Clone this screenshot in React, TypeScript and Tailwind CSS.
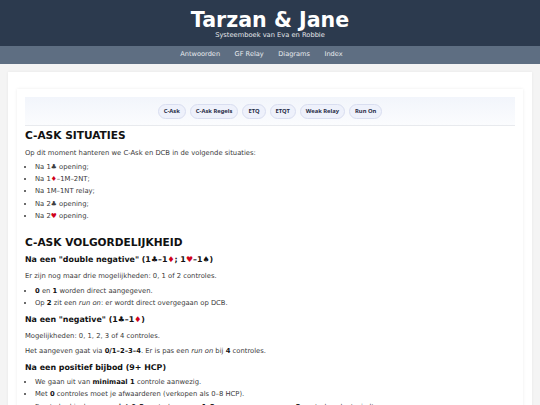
import React from "react";

const S = ({ c, red }: { c: string; red?: boolean }) => (
  <span className={red ? "text-[#d0021b]" : ""}>{c}</span>
);

const Pill = ({ t }: { t: string }) => (
  <span className="h-[15px] px-[5px] flex items-center rounded-full bg-[#eef1fb] border border-[#d9def0] text-[5.8px] font-bold text-[#1f2a44] font-['Noto_Sans',sans-serif]">
    {t}
  </span>
);

const B = ({ children }: { children: React.ReactNode }) => <b className="text-[#111]">{children}</b>;

export default function App() {
  return (
    <div className="min-h-screen bg-[#f4f4f4] font-['DejaVu_Sans',sans-serif]">
      <header className="h-[46px] bg-[#2c3a4e] flex flex-col items-center pt-[8.6px]">
        <div className="text-white font-bold text-[20.6px] leading-[22px]">Tarzan &amp; Jane</div>
        <div className="text-[#e5e7eb] text-[6.7px] leading-[10px] -mt-[1px]">Systeemboek van Eva en Robbie</div>
      </header>
      <nav className="h-[18px] bg-[#5e6e82] flex items-center justify-center gap-[14.5px] pr-[17px] text-[6.6px] text-[#e8ebef]">
        <span>Antwoorden</span>
        <span>GF Relay</span>
        <span>Diagrams</span>
        <span>Index</span>
      </nav>
      <main className="px-[8px] pt-[8px]">
        <div className="bg-white shadow-[0_0_3px_rgba(0,0,0,0.06)] px-[9px] pt-[17px]">
          <div className="bg-white shadow-[0_0_3px_rgba(0,0,0,0.08)] px-[8px] pt-[8px]">
            <div className="h-[29px] bg-gradient-to-b from-[#f2f5fb] to-[#fbfcfe] border-b border-[#e8eaee] flex items-center justify-center gap-[4px]">
              <Pill t="C-Ask" />
              <Pill t="C-Ask Regels" />
              <Pill t="ETQ" />
              <Pill t="ETQT" />
              <Pill t="Weak Relay" />
              <Pill t="Run On" />
            </div>
            <div className="text-[6.8px] text-[#3a3a3a] leading-[10px]">
              <h1 className="text-[10.6px] font-bold text-[#111] leading-[14px] mt-[1.5px]">C-ASK SITUATIES</h1>
              <p className="mt-[6.5px]">Op dit moment hanteren we C-Ask en DCB in de volgende situaties:</p>
              <ul className="mt-[3.5px] pl-[10px] list-disc flex flex-col gap-[2.4px]">
                <li>Na 1<S c="♣" /> opening;</li>
                <li>Na 1<S c="♦" red />–1M–2NT;</li>
                <li>Na 1M–1NT relay;</li>
                <li>Na 2<S c="♣" /> opening;</li>
                <li>Na 2<S c="♥" red /> opening.</li>
              </ul>
              <h1 className="text-[10.6px] font-bold text-[#111] leading-[14px] mt-[14px]">C-ASK VOLGORDELIJKHEID</h1>
              <h2 className="text-[7.9px] font-bold text-[#111] leading-[12px] mt-[4.6px]">
                Na een "double negative" (1<S c="♣" />–1<S c="♦" red />; 1<S c="♥" red />–1<S c="♠" />)
              </h2>
              <p className="mt-[5.7px]">Er zijn nog maar drie mogelijkheden: 0, 1 of 2 controles.</p>
              <ul className="mt-[4.7px] pl-[10px] list-disc flex flex-col gap-[2px]">
                <li><B>0</B> en <B>1</B> worden direct aangegeven.</li>
                <li>Op <B>2</B> zit een <i>run on</i>: er wordt direct overgegaan op DCB.</li>
              </ul>
              <h2 className="text-[7.9px] font-bold text-[#111] leading-[12px] mt-[5.6px]">
                Na een "negative" (1<S c="♣" />–1<S c="♦" red />)
              </h2>
              <p className="mt-[5.2px]">Mogelijkheden: 0, 1, 2, 3 of 4 controles.</p>
              <p className="mt-[5.5px]">Het aangeven gaat via <B>0/1–2–3–4</B>. Er is pas een <i>run on</i> bij <B>4</B> controles.</p>
              <h2 className="text-[7.9px] font-bold text-[#111] leading-[12px] mt-[5.5px]">Na een positief bijbod (9+ HCP)</h2>
              <ul className="mt-[3px] pl-[10px] list-disc flex flex-col gap-[2.5px]">
                <li>We gaan uit van <B>minimaal 1</B> controle aanwezig.</li>
                <li>Met <B>0</B> controles moet je afwaarderen (verkopen als 0–8 HCP).</li>
                <li>Eerste bod is daarmee <B>niet 0–2</B> controles, maar <B>1–2</B>, waarna een <i>run on</i> op <B>2</B> controles plaatsvindt.</li>
              </ul>
            </div>
          </div>
        </div>
      </main>
    </div>
  );
}
